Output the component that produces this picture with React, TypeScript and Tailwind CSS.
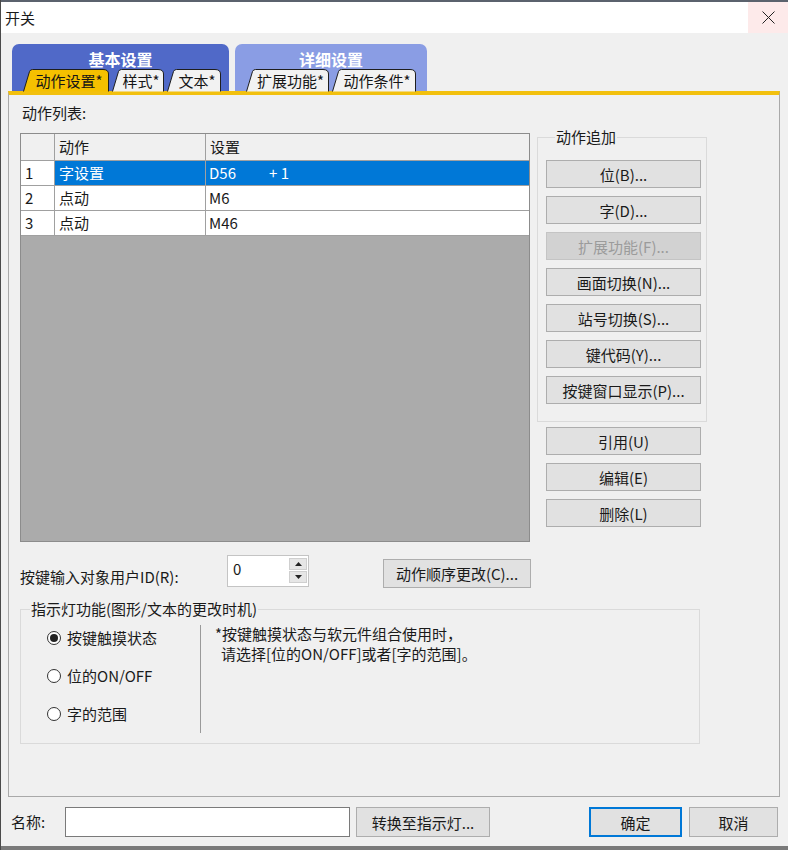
import React from "react";

const Btn = ({ children, disabled }: { children: React.ReactNode; disabled?: boolean }) => (
  <div
    className={`flex h-[28px] w-[155px] items-center justify-center border text-[15px] leading-none ${
      disabled ? "border-[#c4c4c4] bg-[#d2d2d2] text-[#9b9b9b]" : "border-[#adadad] bg-[#e1e1e1] text-[#1a1a1a]"
    }`}
  >
    {children}
  </div>
);

const SubTab = ({ label, w, wClass, active }: { label: string; w: number; wClass: string; active?: boolean }) => {
  const d = `M0.5 22.5 L6.5 2.5 Q7.3 0.5 9.5 0.5 L${w - 6} 0.5 Q${w - 0.5} 0.5 ${w - 0.5} 5 L${w - 0.5} 22.5`;
  return (
    <div className={`relative flex h-[22px] ${wClass} items-center justify-center pl-[6px]`}>
      <svg className="absolute inset-0" width={w} height={23}>
        <path d={d} fill={active ? "#f5c000" : "#f2f2f2"} stroke="#1e1e1e" strokeWidth="1" />
      </svg>
      <span className="relative text-[15px] leading-none text-[#151515]">{label}</span>
    </div>
  );
};

const Radio = ({ label, checked }: { label: string; checked?: boolean }) => (
  <div className="flex h-[20px] items-center gap-[6px]">
    <span className="flex h-[14px] w-[14px] items-center justify-center rounded-full border border-[#333] bg-white">
      {checked && <span className="h-[8px] w-[8px] rounded-full bg-[#222]" />}
    </span>
    <span className="text-[15px] leading-[20px]">{label}</span>
  </div>
);

const rows = [
  { n: "1", a: "字设置", s: "D56", extra: "+ 1", sel: true },
  { n: "2", a: "点动", s: "M6" },
  { n: "3", a: "点动", s: "M46" },
];

export default function App() {
  return (
    <div className="flex h-[850px] w-[788px] flex-col overflow-hidden border-l border-[#4a4a4a] bg-[#f0f0f0] font-['Noto_Sans_CJK_SC',sans-serif] text-[#1a1a1a]">
      {/* title bar */}
      <div className="h-[2px] bg-[#5b626d]" />
      <div className="flex h-[31px] items-center justify-between bg-white">
        <span className="pl-[4px] text-[15px] leading-[20px]">开关</span>
        <div className="flex h-full w-[40px] items-center justify-center bg-[#fdeaea]">
          <svg width="13" height="13" viewBox="0 0 13 13">
            <path d="M0.5 0.5 L12.5 12.5 M12.5 0.5 L0.5 12.5" stroke="#222" strokeWidth="1" />
          </svg>
        </div>
      </div>

      {/* tab groups */}
      <div className="mt-[11px] flex gap-[6px] pl-[11px]">
        <div className="flex h-[47px] w-[217px] flex-col rounded-t-[7px] bg-[#5069c8]">
          <div className="mt-[7px] text-center text-[16px] font-bold leading-[16px] text-white">基本设置</div>
          <div className="mt-auto flex gap-[3px] pl-[11px]">
            <SubTab label="动作设置*" w={86} wClass="w-[86px]" active />
            <SubTab label="样式*" w={52} wClass="w-[52px]" />
            <SubTab label="文本*" w={54} wClass="w-[54px]" />
          </div>
        </div>
        <div className="flex h-[47px] w-[192px] flex-col rounded-t-[7px] bg-[#8a9de4]">
          <div className="mt-[7px] text-center text-[16px] font-bold leading-[16px] text-white">详细设置</div>
          <div className="mt-auto flex gap-[3px] pl-[11px]">
            <SubTab label="扩展功能*" w={83} wClass="w-[83px]" />
            <SubTab label="动作条件*" w={84} wClass="w-[84px]" />
          </div>
        </div>
      </div>

      {/* panel */}
      <div className="ml-[7px] flex h-[706px] w-[772px] flex-col border-x border-b border-[#a9a9a9] border-t-4 border-t-[#f2c00e] px-[11px] pt-[8px]">
        <div className="pl-[2px] text-[15px] leading-[20px]">动作列表:</div>

        <div className="mt-[6px] flex items-start">
          {/* action list grid */}
          <div className="mt-[4px] flex h-[409px] w-[510px] flex-col border border-[#8c8c8c] bg-[#ababab]">
            <div className="grid h-[27px] grid-cols-[34px_151px_323px] bg-[#f0f0f0] text-[15px] leading-[20px]">
              <div className="border-b border-r border-[#a0a0a0]" />
              <div className="flex items-center border-b border-r border-[#a0a0a0] pl-[4px]">动作</div>
              <div className="flex items-center border-b border-[#a0a0a0] pl-[4px]">设置</div>
            </div>
            {rows.map((r) => (
              <div key={r.n} className="grid h-[25px] grid-cols-[34px_151px_323px] text-[15px] leading-[20px]">
                <div className="flex items-center border-b border-r border-[#a0a0a0] bg-white pl-[4px]">{r.n}</div>
                <div
                  className={`flex items-center border-b border-r border-[#a0a0a0] pl-[4px] ${
                    r.sel ? "bg-[#0078d7] text-white" : "bg-white"
                  }`}
                >
                  {r.a}
                </div>
                <div
                  className={`flex items-center border-b border-[#a0a0a0] pl-[3px] ${
                    r.sel ? "bg-[#0078d7] text-white" : "bg-white"
                  }`}
                >
                  <span>{r.s}</span>
                  {r.extra && <span className="ml-[33px]">{r.extra}</span>}
                </div>
              </div>
            ))}
          </div>

          {/* right column */}
          <div className="ml-[7px] flex flex-col">
            <fieldset className="w-[170px] border border-[#dadada] pb-[17px] pl-[8px]">
              <legend className="ml-[9px] px-[1px] text-[15px] leading-[16px]">动作追加</legend>
              <div className="mt-[15px] flex flex-col gap-[8px]">
                <Btn>位(B)...</Btn>
                <Btn>字(D)...</Btn>
                <Btn disabled>扩展功能(F)...</Btn>
                <Btn>画面切换(N)...</Btn>
                <Btn>站号切换(S)...</Btn>
                <Btn>键代码(Y)...</Btn>
                <Btn>按键窗口显示(P)...</Btn>
              </div>
            </fieldset>
            <div className="mt-[5px] flex flex-col gap-[8px] pl-[9px]">
              <Btn>引用(U)</Btn>
              <Btn>编辑(E)</Btn>
              <Btn>删除(L)</Btn>
            </div>
          </div>
        </div>

        {/* user id row */}
        <div className="mt-[13px] flex items-start">
          <div className="mt-[12px] w-[207px] text-[15px] leading-[20px]">按键输入对象用户ID(R):</div>
          <div className="flex h-[32px] w-[82px] border border-[#c4c4c4] bg-white">
            <span className="flex-1 pl-[5px] pt-[3px] text-[15px] leading-[20px]">0</span>
            <div className="mr-[1px] mt-[2px] flex w-[18px] flex-col gap-[1px]">
              <div className="flex h-[12px] items-center justify-center border border-[#cfcfcf] bg-[#e6e6e6]">
                <svg width="7" height="4" viewBox="0 0 7 4">
                  <path d="M0 4 L3.5 0 L7 4 Z" fill="#222" />
                </svg>
              </div>
              <div className="flex h-[12px] items-center justify-center border border-[#cfcfcf] bg-[#e6e6e6]">
                <svg width="7" height="4" viewBox="0 0 7 4">
                  <path d="M0 0 L7 0 L3.5 4 Z" fill="#222" />
                </svg>
              </div>
            </div>
          </div>
          <div className="ml-[74px] mt-[4px] flex h-[29px] w-[148px] items-center justify-center border border-[#adadad] bg-[#e1e1e1] text-[15px] leading-none">
            动作顺序更改(C)...
          </div>
        </div>

        {/* indicator group */}
        <fieldset className="mt-[12px] w-[680px] border border-[#dadada] pb-[10px]">
          <legend className="ml-[9px] px-[1px] text-[15px] leading-[18px]">指示灯功能(图形/文本的更改时机)</legend>
          <div className="mt-[7px] flex items-start">
            <div className="flex w-[179px] flex-col gap-[18px] pl-[26px] pt-[3px]">
              <Radio label="按键触摸状态" checked />
              <Radio label="位的ON/OFF" />
              <Radio label="字的范围" />
            </div>
            <div className="h-[108px] w-px bg-[#9a9a9a]" />
            <div className="-mt-[1px] flex flex-col pl-[14px] text-[15px] leading-[20px]">
              <span>*按键触摸状态与软元件组合使用时，</span>
              <span className="pl-[6px]">请选择[位的ON/OFF]或者[字的范围]。</span>
            </div>
          </div>
        </fieldset>
      </div>

      {/* bottom bar */}
      <div className="mt-[10px] flex items-center pr-[10px]">
        <span className="w-[64px] pl-[10px] text-[15px] leading-[20px]">名称:</span>
        <div className="h-[30px] w-[285px] border border-[#7a7a7a] bg-white" />
        <div className="ml-[6px] flex h-[30px] w-[134px] items-center justify-center border border-[#adadad] bg-[#e1e1e1] text-[15px] leading-none">
          转换至指示灯...
        </div>
        <div className="ml-auto flex h-[30px] w-[93px] items-center justify-center border-2 border-[#0078d7] bg-[#e1e1e1] text-[15px] leading-none">
          确定
        </div>
        <div className="ml-[7px] flex h-[30px] w-[89px] items-center justify-center border border-[#adadad] bg-[#e1e1e1] text-[15px] leading-none">
          取消
        </div>
      </div>
      <div className="mt-auto h-[4px] bg-[#7a7a7a]" />
    </div>
  );
}
